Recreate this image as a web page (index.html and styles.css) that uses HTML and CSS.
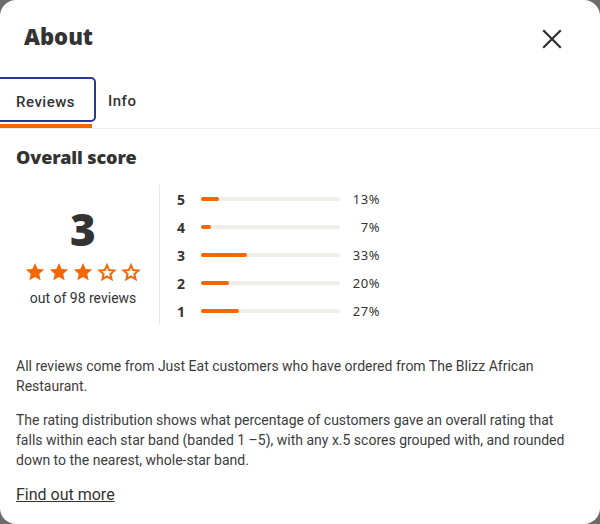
FILE: index.html
```html
<!DOCTYPE html>
<html lang="en">
<head>
<meta charset="utf-8">
<title>About</title>
<link rel="stylesheet" href="styles.css">
</head>
<body>
<div class="modal">
  <header class="header">
    <h1 class="title">About</h1>
    <button class="close" aria-label="Close">
      <svg width="20" height="20" viewBox="0 0 20 20"><path d="M2 2L18 18M18 2L2 18" stroke="#2f2f2f" stroke-width="2.2" stroke-linecap="square"/></svg>
    </button>
  </header>
  <nav class="tabs">
    <div class="tab active"><span>Reviews</span></div>
    <div class="tab"><span>Info</span></div>
  </nav>
  <section class="content">
    <h2 class="subtitle">Overall score</h2>
    <div class="score">
      <div class="summary">
        <div class="big">3</div>
        <div class="stars">
          <svg viewBox="0 0 24 24"><path class="full" d="M12 2.2l2.9 6.6 7.1.6-5.4 4.7 1.6 7-6.2-3.7-6.2 3.7 1.6-7L2 9.4l7.1-.6z"/></svg>
          <svg viewBox="0 0 24 24"><path class="full" d="M12 2.2l2.9 6.6 7.1.6-5.4 4.7 1.6 7-6.2-3.7-6.2 3.7 1.6-7L2 9.4l7.1-.6z"/></svg>
          <svg viewBox="0 0 24 24"><path class="full" d="M12 2.2l2.9 6.6 7.1.6-5.4 4.7 1.6 7-6.2-3.7-6.2 3.7 1.6-7L2 9.4l7.1-.6z"/></svg>
          <svg viewBox="0 0 24 24"><path class="empty" d="M12 4.6l2.3 5.3 5.7.5-4.3 3.8 1.3 5.6-5-3-5 3 1.3-5.6-4.3-3.8 5.7-.5z"/></svg>
          <svg viewBox="0 0 24 24"><path class="empty" d="M12 4.6l2.3 5.3 5.7.5-4.3 3.8 1.3 5.6-5-3-5 3 1.3-5.6-4.3-3.8 5.7-.5z"/></svg>
        </div>
        <div class="count">out of 98 reviews</div>
      </div>
      <div class="dist">
        <div class="row"><span class="lbl">5</span><span class="track"><span class="fill" style="width:13%"></span></span><span class="pct">13%</span></div>
        <div class="row"><span class="lbl">4</span><span class="track"><span class="fill" style="width:7%"></span></span><span class="pct">7%</span></div>
        <div class="row"><span class="lbl">3</span><span class="track"><span class="fill" style="width:33%"></span></span><span class="pct">33%</span></div>
        <div class="row"><span class="lbl">2</span><span class="track"><span class="fill" style="width:20%"></span></span><span class="pct">20%</span></div>
        <div class="row"><span class="lbl">1</span><span class="track"><span class="fill" style="width:27%"></span></span><span class="pct">27%</span></div>
      </div>
    </div>
    <p class="text">All reviews come from Just Eat customers who have ordered from The Blizz African Restaurant.</p>
    <p class="text">The rating distribution shows what percentage of customers gave an overall rating that falls within each star band (banded 1 &ndash;5), with any x.5 scores grouped with, and rounded down to the nearest, whole-star band.</p>
    <a class="more" href="#">Find out more</a>
  </section>
</div>
</body>
</html>
```

FILE: styles.css
```css
* { box-sizing: border-box; }
html, body { margin: 0; padding: 0; }
body {
  background: #6b6b6b;
  font-family: Roboto, "Noto Sans", sans-serif;
  color: #333;
}
.modal {
  width: 600px;
  height: 524px;
  background: #fff;
  border-radius: 16px;
  overflow: hidden;
}
.header {
  display: flex;
  justify-content: space-between;
  align-items: flex-start;
  padding: 21px 38px 0 24px;
  height: 77px;
}
.title {
  margin: 0;
  font-family: "Noto Sans", sans-serif;
  font-weight: 900;
  font-size: 22px;
  line-height: 30px;
  color: #333;
  letter-spacing: 0;
}
.close {
  border: 0;
  background: none;
  padding: 0;
  margin-top: 8px;
  width: 20px;
  height: 20px;
  display: flex;
}
.tabs {
  display: flex;
  border-bottom: 1px solid #ececec;
  height: 52px;
}
.tab {
  position: relative;
  display: flex;
  align-items: center;
  padding: 0 16px;
  height: 51px;
  padding-bottom: 4px;
  font-family: Roboto, sans-serif;
  font-weight: 500;
  font-size: 15px;
  letter-spacing: 0.5px;
  color: #333;
}
.tab.active {
  width: 92px;
  border-bottom: 4px solid #f36805;
  padding-bottom: 0;
  padding-top: 3px;
}
.tab.active::before {
  content: "";
  position: absolute;
  top: 0;
  left: -4px;
  right: -4px;
  bottom: 2px;
  border: 2px solid #2a3893;
  border-radius: 5px;
}
.content {
  padding: 0 16px;
}
.subtitle {
  margin: 17px 0 0;
  font-family: "Noto Sans", sans-serif;
  font-weight: 900;
  font-size: 18px;
  line-height: 22px;
  color: #333;
  letter-spacing: -0.1px;
}
.score {
  display: flex;
  margin-top: 17px;
}
.summary {
  width: 144px;
  padding-right: 9px;
  border-right: 1px solid #e6e6e6;
  display: flex;
  flex-direction: column;
  align-items: center;
  justify-content: center;
  height: 139px;
}
.big {
  font-family: "Noto Sans", sans-serif;
  font-weight: 900;
  font-size: 44px;
  line-height: 46px;
  color: #333;
  margin-top: 2px;
}
.stars {
  display: flex;
  gap: 2px;
  margin-top: 9px;
}
.stars svg { width: 22px; height: 22px; display: block; }
.full { fill: #f36805; }
.empty { fill: none; stroke: #f36805; stroke-width: 2.2; stroke-linejoin: miter; }
.count {
  font-size: 14px;
  margin-top: 7px;
  color: #333;
}
.dist {
  padding-left: 17px;
}
.row {
  display: flex;
  align-items: center;
  height: 28px;
}
.lbl {
  width: 24px;
  font-family: "Noto Sans", sans-serif;
  font-weight: 700;
  font-size: 14px;
  color: #333;
}
.track {
  width: 139px;
  height: 4px;
  border-radius: 2px;
  background: #f1eee9;
  display: block;
}
.fill {
  display: block;
  height: 4px;
  border-radius: 2px;
  background: #f36805;
}
.pct {
  width: 40px;
  text-align: right;
  font-family: "Noto Sans", sans-serif;
  font-size: 13px;
  color: #333;
  letter-spacing: 0.5px;
}
.text {
  margin: 31px 0 0;
  font-size: 14px;
  line-height: 20px;
  color: #3c3c3c;
  max-width: 556px;
}
.text + .text { margin-top: 14px; }
.more {
  display: inline-block;
  margin-top: 15px;
  font-size: 16px;
  line-height: 20px;
  color: #333;
  text-decoration: underline;
}
```
